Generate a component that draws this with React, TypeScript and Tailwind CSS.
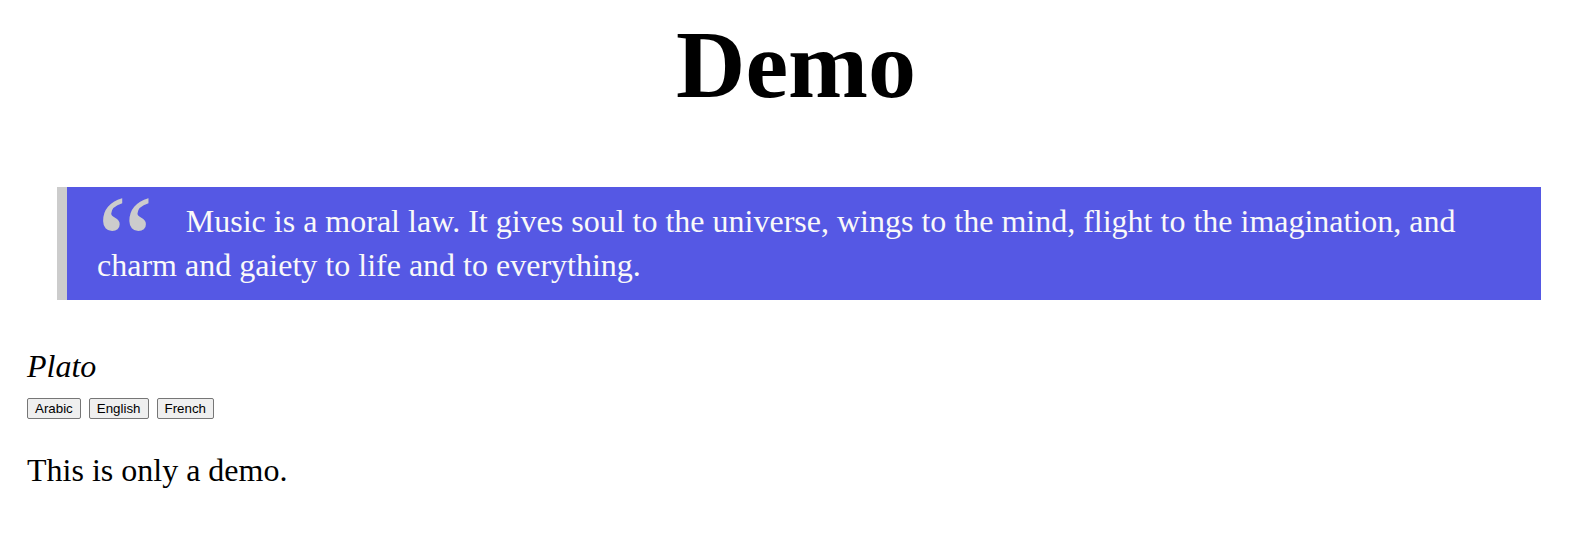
export default function App() {
  return (
    <div className="font-['Liberation_Serif',serif] text-[32px] leading-[37px] text-black pl-[27px] pr-[10px] bg-white min-h-[560px]">
      <h1 className="text-[96px] font-bold text-center leading-[110px] pt-[10px]">Demo</h1>
      <blockquote className="mt-[67px] ml-[30px] mr-[24px] border-l-[10px] border-[#cccccc] bg-[#5558e4] text-[#f9f9f9] pl-[30px] pr-[10px] pt-[16px] pb-[16px] leading-[37px]">
        <span className="text-[128px] leading-[12.8px] align-[-0.4em] mr-[0.25em] text-[#cccccc]">“</span>
        Music is a moral law. It gives soul to the universe, wings to the mind, flight to the imagination, and charm and gaiety to life and to everything.
      </blockquote>
      <p className="italic mt-[48px]">Plato</p>
      <div className="flex gap-2 mt-[13px] font-['Liberation_Sans',Arial,sans-serif] text-[13.333px] leading-[17px]">
        <button className="px-[7px] py-[1px] bg-[#efefef] border border-[#767676] rounded-[2px] text-black">Arabic</button>
        <button className="px-[7px] py-[1px] bg-[#efefef] border border-[#767676] rounded-[2px] text-black">English</button>
        <button className="px-[7px] py-[1px] bg-[#efefef] border border-[#767676] rounded-[2px] text-black">French</button>
      </div>
      <p className="mt-[33px]">This is only a demo.</p>
    </div>
  );
}
